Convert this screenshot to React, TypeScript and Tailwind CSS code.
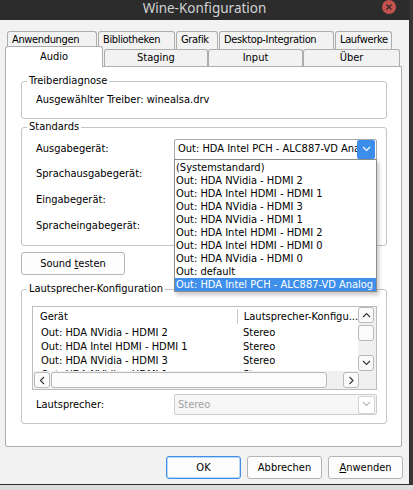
import { FC, ReactNode } from "react";

const Chevron: FC<{ dir: "up" | "down" | "left" | "right"; color?: string }> = ({ dir, color = "#333" }) => {
  const pts =
    dir === "down" ? "1,2 4.5,5.5 8,2" : dir === "up" ? "1,6 4.5,2.5 8,6" : dir === "left" ? "6,1 2.5,4.5 6,8" : "2.5,1 6,4.5 2.5,8";
  return (
    <svg width="9" height="9" viewBox="0 0 9 9">
      <polyline points={pts} fill="none" stroke={color} strokeWidth="1.1" />
    </svg>
  );
};

const GroupBox: FC<{ title: string; className: string; children?: ReactNode }> = ({ title, className, children }) => (
  <div className={`relative ml-[15px] w-[366px] rounded-[3px] border border-[#c4c4c4] ${className}`}>
    <span className="absolute -top-[8px] left-[5px] bg-white px-[2px] leading-[14px]">{title}</span>
    {children}
  </div>
);

const ScrollBtn: FC<{ dir: "up" | "down" | "left" | "right"; className?: string }> = ({ dir, className = "" }) => (
  <div className={`flex h-[16px] w-[16px] items-center justify-center rounded-[3px] border border-[#b9b9b9] bg-[#fbfbfb] ${className}`}>
    <Chevron dir={dir} />
  </div>
);

const devices = [
  "(Systemstandard)",
  "Out: HDA NVidia - HDMI 2",
  "Out: HDA Intel HDMI - HDMI 1",
  "Out: HDA NVidia - HDMI 3",
  "Out: HDA NVidia - HDMI 1",
  "Out: HDA Intel HDMI - HDMI 2",
  "Out: HDA Intel HDMI - HDMI 0",
  "Out: HDA NVidia - HDMI 0",
  "Out: default",
  "Out: HDA Intel PCH - ALC887-VD Analog",
];

const speakers = [
  "Out: HDA NVidia - HDMI 2",
  "Out: HDA Intel HDMI - HDMI 1",
  "Out: HDA NVidia - HDMI 3",
  "Out: HDA NVidia - HDMI 1",
];

const topTabs = [
  { label: "Anwendungen", w: "w-[90px]" },
  { label: "Bibliotheken", w: "w-[77px]" },
  { label: "Grafik", w: "w-[42px]" },
  { label: "Desktop-Integration", w: "w-[115px]" },
  { label: "Laufwerke", w: "w-[57px]" },
];

export default function App() {
  return (
    <div className="relative h-[490px] w-[413px] overflow-hidden bg-[#dcdcdc] font-[family-name:'DejaVu_Sans_Condensed','DejaVu_Sans',sans-serif] text-[11px] text-black">
      <div className="flex h-[485px]">
        <div className="flex w-[410px] flex-col border-r border-b border-[#2e2e2e] bg-[#f2f2f2]">
          {/* title bar */}
          <div className="relative h-[20px] shrink-0 bg-[#2c2c2c]">
            <div className="text-center font-[family-name:'Noto_Sans',sans-serif] text-[13.5px] leading-[16px] text-[#d2d2d2]">
              Wine-Konfiguration
            </div>
            <div className="absolute top-0 left-[382px] flex h-[14px] w-[14px] items-center justify-center rounded-full bg-[#c4524c]">
              <svg width="6" height="6" viewBox="0 0 6 6">
                <path d="M0.5 0.5 L5.5 5.5 M5.5 0.5 L0.5 5.5" stroke="#2c2c2c" strokeWidth="1.3" />
              </svg>
            </div>
          </div>

          {/* tabs row 1 */}
          <div className="mt-[11px] flex h-[18px] gap-[1px] pl-[7px]">
            {topTabs.map((t) => (
              <div
                key={t.label}
                className={`${t.w} overflow-hidden rounded-t-[3px] border border-b-0 border-[#adadad] bg-[#f2f2f2] pt-[1px] pl-[4px] leading-[14px] tracking-[-0.35px] whitespace-nowrap`}
              >
                {t.label}
              </div>
            ))}
          </div>

          {/* tabs row 2 */}
          <div className="flex h-[17px] items-end">
            <div className="relative z-10 -mb-[1px] ml-[5px] flex h-[21px] w-[98px] items-center justify-center rounded-t-[3px] border border-b-0 border-[#adadad] bg-white leading-[14px]">
              Audio
            </div>
            <div className="ml-[1px] flex h-[17px] w-[104px] items-center justify-center rounded-t-[3px] border border-b-0 border-[#adadad] bg-[#f2f2f2] leading-[14px]">
              Staging
            </div>
            <div className="flex h-[17px] w-[95px] items-center justify-center rounded-t-[3px] border border-b-0 border-[#adadad] bg-[#f2f2f2] leading-[14px]">
              Input
            </div>
            <div className="flex h-[17px] w-[97px] items-center justify-center rounded-t-[3px] border border-b-0 border-[#adadad] bg-[#f2f2f2] leading-[14px]">
              Über
            </div>
          </div>

          {/* panel */}
          <div className="ml-[5px] h-[381px] w-[397px] rounded-b-[2px] border border-[#adadad] bg-white">
            <GroupBox title="Treiberdiagnose" className="mt-[14px] h-[38px]">
              <div className="pt-[11px] pl-[14px] leading-[14px]">Ausgewählter Treiber: winealsa.drv</div>
            </GroupBox>

            <GroupBox title="Standards" className="mt-[8px] h-[119px]">
              <div className="pt-[9px]">
                <div className="flex h-[24px] items-center pl-[14px]">
                  <div className="w-[138px] leading-[14px]">Ausgabegerät:</div>
                  <div className="relative z-20">
                    <div className="flex h-[21px] w-[203px] items-center rounded-[2px] border border-[#a9a9a9] bg-white">
                      <div className="w-[183px] overflow-hidden pl-[3px] leading-[14px] whitespace-nowrap">
                        Out: HDA Intel PCH - ALC887-VD Analog
                      </div>
                      <div className="ml-auto mr-[1px] flex h-[19px] w-[18px] items-center justify-center rounded-[2px] bg-[#3b8eea]">
                        <Chevron dir="down" color="#ffffff" />
                      </div>
                    </div>
                    <div className="absolute top-[20px] left-0 w-[203px] border border-[#8c8c8c] bg-white pt-[1px] shadow-[2px_3px_4px_rgba(0,0,0,0.22)]">
                      {devices.map((d, i) => (
                        <div
                          key={d}
                          className={`h-[13px] pl-[1px] leading-[13px] whitespace-nowrap ${
                            i === devices.length - 1 ? "bg-[#3d8fea] text-white" : ""
                          }`}
                        >
                          {d}
                        </div>
                      ))}
                    </div>
                  </div>
                </div>
                <div className="flex h-[26px] items-center pl-[14px] leading-[14px]">Sprachausgabegerät:</div>
                <div className="flex h-[26px] items-center pl-[14px] leading-[14px]">Eingabegerät:</div>
                <div className="flex h-[26px] items-center pl-[14px] leading-[14px]">Spracheingabegerät:</div>
              </div>
            </GroupBox>

            <button className="mt-[6px] ml-[15px] flex h-[23px] w-[104px] items-center justify-center rounded-[3px] border border-[#b4b4b4] bg-[#fdfdfd] leading-[14px]">
              <span>
                Sound <span className="underline">t</span>esten
              </span>
            </button>

            <GroupBox title="Lautsprecher-Konfiguration" className="mt-[14px] h-[135px]">
              <div className="mt-[16px] ml-[10px] grid h-[84px] w-[345px] grid-cols-[325px_18px] grid-rows-[64px_18px] border border-[#bdbdbd]">
                <div className="overflow-hidden">
                  <div className="flex h-[19px] items-center leading-[14px]">
                    <div className="w-[204px] pl-[7px]">Gerät</div>
                    <div className="h-[15px] w-[1px] bg-[#c8c8c8]" />
                    <div className="overflow-hidden pl-[6px] whitespace-nowrap">Lautsprecher-Konfigu...</div>
                  </div>
                  {speakers.map((s) => (
                    <div key={s} className="flex h-[14px] items-center leading-[14px] whitespace-nowrap">
                      <div className="w-[205px] pl-[8px]">{s}</div>
                      <div className="pl-[5px]">Stereo</div>
                    </div>
                  ))}
                </div>
                <div className="flex flex-col bg-[#f0f0f0]">
                  <ScrollBtn dir="up" />
                  <div className="mt-[2px] h-[16px] w-[16px] rounded-[3px] border border-[#b9b9b9] bg-[#fbfbfb]" />
                  <ScrollBtn dir="down" className="mt-auto" />
                </div>
                <div className="col-span-2 flex items-center bg-[#f0f0f0]">
                  <ScrollBtn dir="left" className="ml-[1px]" />
                  <div className="ml-[1px] h-[16px] w-[276px] rounded-[3px] border border-[#b9b9b9] bg-[#fbfbfb]" />
                  <div className="flex-1" />
                  <ScrollBtn dir="right" />
                  <div className="w-[17px]" />
                </div>
              </div>

              <div className="mt-[4px] flex items-center pl-[14px]">
                <div className="w-[138px] leading-[14px]">Lautsprecher:</div>
                <div className="flex h-[21px] w-[203px] items-center rounded-[2px] border border-[#cdcdcd] bg-[#f6f6f6]">
                  <div className="pl-[3px] leading-[14px] text-[#a3a3a3]">Stereo</div>
                  <div className="ml-auto mr-[1px] flex h-[18px] w-[17px] items-center justify-center rounded-[2px] border border-[#d2d2d2] bg-white">
                    <Chevron dir="down" color="#b8b8b8" />
                  </div>
                </div>
              </div>
            </GroupBox>
          </div>

          {/* dialog buttons */}
          <div className="mt-[9px] flex justify-end gap-[6px] pr-[6px]">
            <button className="flex h-[23px] w-[75px] items-center justify-center rounded-[3px] border border-[#3d8ee9] bg-[#fdfdfd] leading-[14px] shadow-[inset_0_0_0_1px_rgba(61,142,233,0.35)]">
              OK
            </button>
            <button className="flex h-[23px] w-[75px] items-center justify-center rounded-[3px] border border-[#b4b4b4] bg-[#fdfdfd] leading-[14px]">
              Abbrechen
            </button>
            <button className="flex h-[23px] w-[75px] items-center justify-center rounded-[3px] border border-[#b4b4b4] bg-[#fdfdfd] leading-[14px]">
              <span>
                <span className="underline">A</span>nwenden
              </span>
            </button>
          </div>
        </div>
        <div className="flex-1 bg-[#363636]" />
      </div>
    </div>
  );
}
